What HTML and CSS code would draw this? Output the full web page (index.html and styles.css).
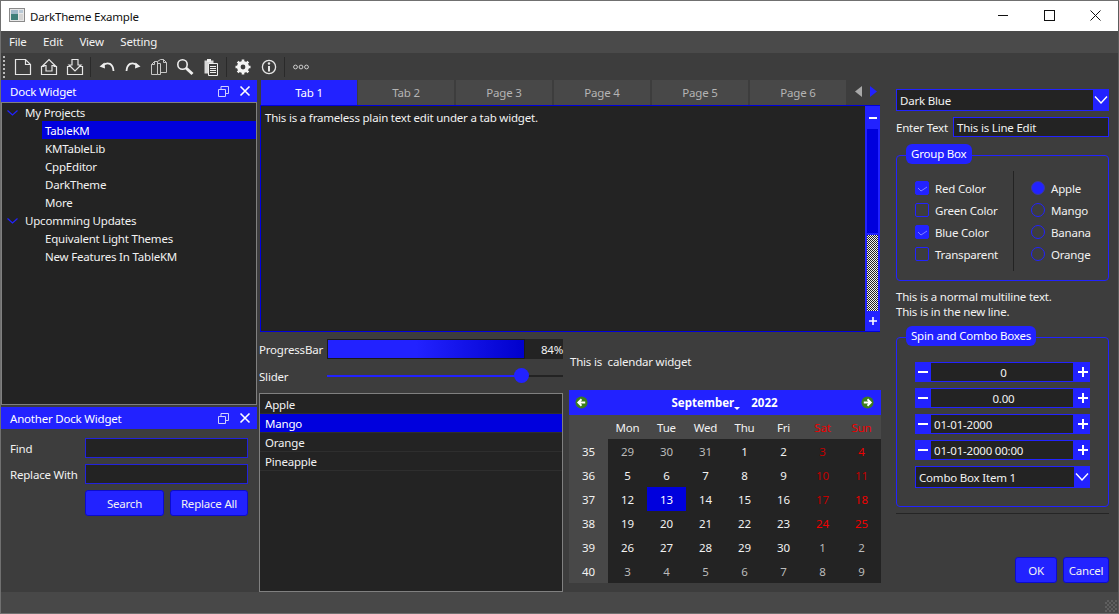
FILE: index.html
```html
<!DOCTYPE html>
<html lang="en">
<head>
<meta charset="utf-8">
<title>DarkTheme Example</title>
<link rel="stylesheet" href="styles.css">
</head>
<body>
<div class="window">
  <header class="titlebar">
    <svg class="app-icon" width="16" height="16" viewBox="0 0 16 16"><rect x="0.5" y="1.5" width="15" height="13" fill="#e8e8e8" stroke="#8a8a8a"/><rect x="2" y="3" width="7" height="10" fill="#3f7f7a"/><rect x="2" y="3" width="7" height="4" fill="#9fb8c8"/><rect x="10" y="3" width="4" height="3" fill="#b9c9d6"/><rect x="10" y="7" width="4" height="6" fill="#d4d4d4"/></svg>
    <span class="title-text">DarkTheme Example</span>
    <div class="win-controls">
      <span class="win-btn"><svg width="10" height="10" viewBox="0 0 10 10"><path d="M0 5.500h10" stroke="#111" fill="none"/></svg></span>
      <span class="win-btn"><svg width="11" height="11" viewBox="0 0 11 11"><rect x=".5" y=".5" width="10" height="10" stroke="#111" fill="none"/></svg></span>
      <span class="win-btn"><svg width="11" height="11" viewBox="0 0 11 11"><path d="M.5 .5l10 10M10.500 .5l-10 10" stroke="#111" fill="none"/></svg></span>
    </div>
  </header>
  <nav class="menubar"><span>File</span><span>Edit</span><span>View</span><span>Setting</span></nav>
  <div class="toolbar">
    <span class="grip"></span>
    <svg class="tb" width="18" height="18" viewBox="0 0 18 18"><path d="M1.500 1.500h10l5 5v10h-15zM11.500 1.500v5h5" fill="none" stroke="#e6e6e6" stroke-width="1.2"/></svg>
    <svg class="tb" width="18" height="18" viewBox="0 0 18 18"><path d="M4.500 8.500h-3v8h15v-8h-3M6 13h6V7.500h3L9 1.500 3 7.500h3z" fill="none" stroke="#e6e6e6" stroke-width="1.2"/></svg>
    <svg class="tb" width="18" height="18" viewBox="0 0 18 18"><path d="M4.500 8.500h-3v8h15v-8h-3M6 1.500h6V7h3l-6 6-6-6h3z" fill="none" stroke="#e6e6e6" stroke-width="1.2"/></svg>
    <span class="tb-sep"></span>
    <svg class="tb" width="18" height="18" viewBox="0 0 18 18"><path d="M5 7c5-3.500 10-1.500 10.500 6" fill="none" stroke="#eee" stroke-width="1.800"/><path d="M1.500 8.500l5-4 .5 6z" fill="#eee"/></svg>
    <svg class="tb" width="18" height="18" viewBox="0 0 18 18"><path d="M2.500 13c.5-7.500 5.500-9.500 10.500-6" fill="none" stroke="#eee" stroke-width="1.800"/><path d="M16.500 8.500l-5-4-.5 6z" fill="#eee"/></svg>
    <svg class="tb" width="18" height="18" viewBox="0 0 18 18"><path d="M1.500 6.500l3-3h3v13h-6zM1.500 6.500h3v-3M7.500 3.500l3-2h3l3 3v10h-6M13.500 1.500v3h3" fill="none" stroke="#c8c8c8"/><path d="M7.500 5.500h3v11h-3" fill="none" stroke="#c8c8c8"/></svg>
    <svg class="tb" width="18" height="18" viewBox="0 0 18 18"><circle cx="6.500" cy="6.500" r="4.700" fill="none" stroke="#eee" stroke-width="1.600"/><path d="M10 10l6.500 6" stroke="#eee" stroke-width="3"/></svg>
    <svg class="tb" width="18" height="18" viewBox="0 0 18 18"><path d="M2.500 2.500h9v13h-9z" fill="#d8d8d8"/><rect x="5" y="1" width="4" height="3" fill="#eee"/><path d="M6.500 5.500h9v12h-9z" fill="#3d3d3d" stroke="#eee"/><path d="M8 8.500h6M8 10.500h6M8 12.500h6M8 14.500h6" stroke="#eee"/></svg>
    <span class="tb-sep"></span>
    <svg class="tb" width="18" height="18" viewBox="0 0 18 18"><circle cx="9" cy="9" r="4.500" fill="none" stroke="#f4f4f4" stroke-width="3.200"/><path d="M9 1.500v15M1.500 9h15M3.700 3.700l10.600 10.600M14.300 3.700L3.700 14.300" stroke="#f4f4f4" stroke-width="2.600"/><circle cx="9" cy="9" r="2.400" fill="#3d3d3d"/></svg>
    <svg class="tb" width="18" height="18" viewBox="0 0 18 18"><circle cx="9" cy="9" r="6.600" fill="none" stroke="#e6e6e6" stroke-width="1.300"/><path d="M9 8v5.500" stroke="#e6e6e6" stroke-width="2"/><circle cx="9" cy="5.500" r="1.200" fill="#e6e6e6"/></svg>
    <span class="tb-sep"></span>
    <svg class="tb" width="18" height="18" viewBox="0 0 18 18"><circle cx="3.500" cy="9" r="1.900" fill="none" stroke="#ccc"/><circle cx="9" cy="9" r="1.900" fill="none" stroke="#ccc"/><circle cx="14.500" cy="9" r="1.900" fill="none" stroke="#ccc"/></svg>
  </div>

  <main class="main">
    <aside class="left">
      <section class="dock-tree">
        <div class="dock-title"><span>Dock Widget</span>
          <svg class="dock-ico" width="11" height="11" viewBox="0 0 11 11"><path d="M.5 3.500h7v7h-7zM3 3.500v-3h7.500v7h-3" fill="none" stroke="#cfcfff"/></svg>
          <svg class="dock-ico" width="12" height="12" viewBox="0 0 12 12"><path d="M1.500 1.500l9 9M10.500 1.500l-9 9" stroke="#fff" stroke-width="1.600"/></svg>
        </div>
        <div class="tree">
          <div class="tree-row"><svg class="chev" width="11" height="6" viewBox="0 0 11 6"><path d="M.5 .5l5 4.500 5-4.500" stroke="#2222ff" stroke-width="1.200" fill="none"/></svg>My Projects</div>
          <div class="tree-row child sel">TableKM</div>
          <div class="tree-row child">KMTableLib</div>
          <div class="tree-row child">CppEditor</div>
          <div class="tree-row child">DarkTheme</div>
          <div class="tree-row child">More</div>
          <div class="tree-row"><svg class="chev" width="11" height="6" viewBox="0 0 11 6"><path d="M.5 .5l5 4.500 5-4.500" stroke="#2222ff" stroke-width="1.200" fill="none"/></svg>Upcomming Updates</div>
          <div class="tree-row child">Equivalent Light Themes</div>
          <div class="tree-row child">New Features In TableKM</div>
        </div>
      </section>
      <section class="dock-find">
        <div class="dock-title"><span>Another Dock Widget</span>
          <svg class="dock-ico" width="11" height="11" viewBox="0 0 11 11"><path d="M.5 3.500h7v7h-7zM3 3.500v-3h7.500v7h-3" fill="none" stroke="#cfcfff"/></svg>
          <svg class="dock-ico" width="12" height="12" viewBox="0 0 12 12"><path d="M1.500 1.500l9 9M10.500 1.500l-9 9" stroke="#fff" stroke-width="1.600"/></svg>
        </div>
        <div class="find-form">
          <label>Find</label><div class="input"></div>
          <label>Replace With</label><div class="input"></div>
          <div class="find-btns"><span class="btn search">Search</span><span class="btn replace">Replace All</span></div>
        </div>
      </section>
    </aside>

    <section class="center">
      <div class="tabs">
        <span class="tab active">Tab 1</span><span class="tab">Tab 2</span><span class="tab">Page 3</span><span class="tab">Page 4</span><span class="tab">Page 5</span><span class="tab">Page 6</span>
        <span class="tab-arrows"><svg width="7" height="11" viewBox="0 0 7 11"><path d="M7 0v11L0 5.500z" fill="#a8a8a8"/></svg><svg width="7" height="11" viewBox="0 0 7 11"><path d="M0 0v11l7-5.500z" fill="#2222ff"/></svg></span>
      </div>
      <div class="editor">
        <div class="editor-text">This is a frameless plain text edit under a tab widget.</div>
        <div class="scrollbar">
          <span class="sb-btn"><svg width="8" height="2" viewBox="0 0 8 2"><rect width="8" height="2" fill="#fff"/></svg></span>
          <span class="sb-handle"></span>
          <span class="sb-hatch"></span>
          <span class="sb-btn"><svg width="8" height="8" viewBox="0 0 8 8"><path d="M0 4h8M4 0v8" stroke="#fff" stroke-width="1.600"/></svg></span>
        </div>
      </div>
      <div class="lower">
        <div class="lower-left">
          <div class="form-row"><span class="row-label">ProgressBar</span>
            <div class="progress"><div class="progress-fill" style="width:84%"></div><span class="progress-val">84%</span></div>
          </div>
          <div class="form-row"><span class="row-label">Slider</span>
            <div class="slider"><div class="slider-on" style="width:195px"></div><span class="slider-knob"></span></div>
          </div>
          <ul class="list">
            <li>Apple</li><li class="sel">Mango</li><li>Orange</li><li>Pineapple</li>
          </ul>
        </div>
        <div class="lower-right">
          <div class="cal-label">This is &nbsp;calendar widget</div>
          <div class="calendar">
            <div class="cal-head">
              <svg width="13" height="13" viewBox="0 0 14 14"><circle cx="7" cy="7" r="6.500" fill="#3c7d1c"/><path d="M11 7H4M7 3.500L3.500 7 7 10.500" stroke="#fff" stroke-width="2" fill="none"/></svg>
              <span class="cal-month">September<i class="cal-caret"></i></span><span class="cal-year">2022</span>
              <svg width="13" height="13" viewBox="0 0 14 14"><circle cx="7" cy="7" r="6.500" fill="#3c7d1c"/><path d="M3 7h7M7 3.500L10.500 7 7 10.500" stroke="#fff" stroke-width="2" fill="none"/></svg>
            </div>
            <div class="cal-grid">
              <span class="wk hd"></span><span class="hd">Mon</span><span class="hd">Tue</span><span class="hd">Wed</span><span class="hd">Thu</span><span class="hd">Fri</span><span class="hd red">Sat</span><span class="hd red">Sun</span>
              <span class="wk">35</span><span class="dim">29</span><span class="dim">30</span><span class="dim">31</span><span>1</span><span>2</span><span class="red dk">3</span><span class="red">4</span>
              <span class="wk">36</span><span>5</span><span>6</span><span>7</span><span>8</span><span>9</span><span class="red dk">10</span><span class="red dk">11</span>
              <span class="wk">37</span><span>12</span><span class="today">13</span><span>14</span><span>15</span><span>16</span><span class="red dk">17</span><span class="red">18</span>
              <span class="wk">38</span><span>19</span><span>20</span><span>21</span><span>22</span><span>23</span><span class="red">24</span><span class="red">25</span>
              <span class="wk">39</span><span>26</span><span>27</span><span>28</span><span>29</span><span>30</span><span class="dim">1</span><span class="dim">2</span>
              <span class="wk">40</span><span class="dim">3</span><span class="dim">4</span><span class="dim">5</span><span class="dim">6</span><span class="dim">7</span><span class="dim">8</span><span class="dim">9</span>
            </div>
          </div>
        </div>
      </div>
    </section>

    <aside class="right">
      <div class="combo top-combo"><span class="combo-text">Dark Blue</span><span class="combo-arrow"><svg width="14" height="8" viewBox="0 0 14 8"><path d="M1 .5l6 6.500 6-6.500" stroke="#fff" stroke-width="1.400" fill="none"/></svg></span></div>
      <div class="line-row"><span>Enter Text</span><div class="line-edit">This is Line Edit</div></div>
      <div class="group group-one">
        <span class="pill">Group Box</span>
        <div class="checks">
          <div class="opt"><span class="check on"><svg width="12" height="12" viewBox="0 0 12 12"><path d="M2 6l3 3 6-4" stroke="#8080ff" fill="none"/></svg></span>Red Color</div>
          <div class="opt"><span class="check"></span>Green Color</div>
          <div class="opt"><span class="check on"><svg width="12" height="12" viewBox="0 0 12 12"><path d="M2 6l3 3 6-4" stroke="#8080ff" fill="none"/></svg></span>Blue Color</div>
          <div class="opt"><span class="check"></span>Transparent</div>
        </div>
        <div class="vsep"></div>
        <div class="radios">
          <div class="opt"><span class="radio on"></span>Apple</div>
          <div class="opt"><span class="radio"></span>Mango</div>
          <div class="opt"><span class="radio"></span>Banana</div>
          <div class="opt"><span class="radio"></span>Orange</div>
        </div>
      </div>
      <p class="multi">This is a normal multiline text.<br>This is in the new line.</p>
      <div class="group group-two">
        <span class="pill">Spin and Combo Boxes</span>
        <div class="spin"><span class="spin-btn minus"></span><span class="spin-val mid">0</span><span class="spin-btn plus"></span></div>
        <div class="spin"><span class="spin-btn minus"></span><span class="spin-val mid">0.00</span><span class="spin-btn plus"></span></div>
        <div class="spin"><span class="spin-btn minus"></span><span class="spin-val">01-01-2000</span><span class="spin-btn plus"></span></div>
        <div class="spin"><span class="spin-btn minus"></span><span class="spin-val">01-01-2000 00:00</span><span class="spin-btn plus"></span></div>
        <div class="combo low-combo"><span class="combo-text">Combo Box Item 1</span><span class="combo-arrow"><svg width="14" height="8" viewBox="0 0 14 8"><path d="M1 .5l6 6.500 6-6.500" stroke="#fff" stroke-width="1.400" fill="none"/></svg></span></div>
      </div>
      <div class="hline"></div>
      <div class="dialog-btns"><span class="btn ok">OK</span><span class="btn cancel">Cancel</span></div>
    </aside>
  </main>
  <footer class="statusbar"><span class="size-grip"></span></footer>
</div>
</body>
</html>
```
FILE: styles.css
```css
* { box-sizing: border-box; }
html, body { margin: 0; padding: 0; }
body { font-family: "Noto Sans", "Open Sans", sans-serif; font-size: 11.5px; letter-spacing: -0.2px; color: #f2f2f2; background: #3d3d3d; overflow: hidden; }
.window { width: 1119px; height: 614px; display: flex; flex-direction: column; border: 1px solid #707070; border-right-color: #5c5c5c; background: #3d3d3d; overflow: hidden; }

.titlebar { height: 30px; flex: none; background: #fff; color: #111; display: flex; align-items: center; padding-left: 8px; }
.app-icon { margin: 0 5px 2px 0; }
.win-controls { margin-left: auto; display: flex; }
.win-btn { width: 46px; height: 30px; padding-bottom: 2px; display: flex; align-items: center; justify-content: center; }

.menubar { height: 22px; flex: none; background: #4a4a4a; display: flex; align-items: center; padding: 0 0 1px 8px; gap: 16.5px; }

.toolbar { height: 27px; flex: none; background: #3d3d3d; display: flex; align-items: center; padding-left: 2px; }
.grip { width: 2px; height: 22px; margin-right: 9px; background: repeating-linear-gradient(#bbb 0 2px, transparent 2px 4px); }
.tb { margin-right: 8px; flex: none; }
.tb-sep { width: 1px; height: 20px; background: #2a2a2a; margin: 0 7px 0 -2px; }

.main { height: 512px; flex: none; display: flex; }
.left { width: 256px; flex: none; display: flex; flex-direction: column; margin-right: 2px; }
.dock-title { height: 22px; flex: none; background: #2222ff; color: #fff; display: flex; align-items: center; padding: 0 6px 0 9px; }
.dock-title span { margin-right: auto; }
.dock-ico { margin-left: 10px; }
.dock-tree { height: 325px; flex: none; display: flex; flex-direction: column; }
.tree { flex: 1; background: #232323; border: 1px solid #808080; }
.tree-row { height: 18px; display: flex; align-items: center; padding-left: 23px; position: relative; }
.tree-row.child { margin-left: 40px; padding-left: 3px; }
.tree-row.sel, .list .sel { background: #0000dd; color: #fff; }
.chev { position: absolute; left: 5px; top: 7px; }

.dock-find { margin-top: 2px; flex: 1; display: flex; flex-direction: column; }
.find-form { display: grid; grid-template-columns: 75px 163px; row-gap: 6px; padding: 9px 0 0 9px; align-items: center; }
.input { height: 20px; background: #232323; border: 1px solid #2222dd; }
.find-btns { grid-column: 2; display: flex; gap: 6px; }
.btn { height: 26px; background: #2222ff; border: 1px solid #0c0ccc; border-radius: 3px; display: flex; align-items: center; justify-content: center; color: #f2f2f2; }
.search { width: 79px; }
.replace { width: 78px; }

.center { width: 623px; flex: none; display: flex; flex-direction: column; }
.tabs { height: 25px; flex: none; display: flex; padding-left: 2px; }
.tab { width: 98px; background: #484848; border-right: 2px solid #3d3d3d; color: #b4b4b4; display: flex; align-items: center; justify-content: center; }
.tab.active { width: 97px; background: #2222ff; color: #fff; border-right-width: 1px; }
.tab-arrows { display: flex; align-items: center; gap: 8px; padding: 0 0 2px 7px; }
.editor { height: 227px; flex: none; margin-left: 1px; width: 620px; display: flex; border: 1px solid #0000dd; border-right: none; background: #232323; }
.editor-text { flex: 1; padding: 4px; }
.scrollbar { width: 15px; flex: none; background: #2222ff; display: flex; flex-direction: column; align-items: center; }
.sb-btn { height: 23px; flex: none; width: 100%; display: flex; align-items: center; justify-content: center; }
.sb-btn:last-child { height: 20px; }
.sb-handle { width: 11px; height: 104px; flex: none; background: #0000dd; }
.sb-hatch { width: 11px; flex: 1; margin-top: 2px; background: repeating-conic-gradient(#f0f0f0 0 25%, #222 0 50%) 0 0 / 2px 2px; }

.lower { flex: 1; display: flex; }
.lower-left { width: 304px; flex: none; display: flex; flex-direction: column; }
.form-row { display: flex; align-items: center; height: 20px; margin-top: 7px; }
.row-label { width: 68px; flex: none; }
.progress { flex: 1; height: 20px; background: #232323; position: relative; display: flex; align-items: center; justify-content: flex-end; }
.progress-fill { position: absolute; left: 0; top: 0; bottom: 0; border: 1px solid #1a1a1a; background: linear-gradient(90deg, #2222ff, #2222ff 45%, #0000cc); }
.progress-val { position: relative; }
.slider { flex: 1; height: 2px; background: #232323; position: relative; }
.slider-on { height: 2px; background: #2222ff; }
.slider-knob { position: absolute; left: 187px; top: -7px; width: 15px; height: 15px; border-radius: 50%; background: #2222ff; }
.list { list-style: none; margin: 7px 0 0; padding: 1px 0 0; height: 199px; background: #232323; border: 1px solid #808080; }
.list li { height: 19px; padding-left: 5px; display: flex; align-items: center; border-bottom: 1px solid #2e2e2e; }

.lower-right { margin-left: 6px; width: 312px; flex: none; display: flex; flex-direction: column; }
.cal-label { height: 16px; margin-top: 22px; margin-left: 1px; line-height: 16px; }
.calendar { margin-top: 20px; }
.cal-head { height: 25px; background: #2222ff; display: flex; align-items: center; padding: 0 7px 1px 6px; font-weight: 700; letter-spacing: 0; color: #fff; }
.cal-month { margin-left: auto; position: relative; margin-right: 14px; padding-right: 3px; }
.cal-caret { position: absolute; right: -3px; bottom: 0; border: 3px solid transparent; border-top-color: #fff; border-bottom: 0; }
.cal-year { margin-right: auto; }
.cal-grid { display: grid; grid-template-columns: repeat(8, 39px); grid-auto-rows: 24px; background: #232323; }
.cal-grid span { display: flex; align-items: center; justify-content: center; }
.cal-grid .hd, .cal-grid .wk { background: #484848; }
.cal-grid .dim { color: #bbbbbb; }
.cal-grid .red { color: #ee0000; }
.cal-grid .red.dk { color: #c00000; }
.cal-grid .today { background: #0000dd; color: #fff; }

.right { flex: 1; padding: 9px 9px 0 14px; display: flex; flex-direction: column; }
.combo { display: flex; flex: none; height: 22px; background: #232323; border: 1px solid #2222ff; }
.combo-text { flex: 1; padding-left: 3px; display: flex; align-items: center; }
.combo-arrow { width: 15px; background: #2222ff; display: flex; align-items: center; justify-content: center; }
.line-row { display: flex; flex: none; align-items: center; justify-content: space-between; margin-top: 6px; height: 20px; }
.line-edit { width: 156px; height: 20px; background: #232323; border: 1px solid #2222ff; padding-left: 3px; display: flex; align-items: center; }
.group { flex: none; position: relative; border: 1px solid #2222ff; border-radius: 4px; }
.pill { position: absolute; left: 9px; top: -12px; height: 20px; padding: 0 5px; line-height: 19px; background: #2222ff; border-radius: 6px; color: #fff; white-space: nowrap; }
.group-one { height: 126px; margin-top: 18px; display: flex; padding: 15px 0 0 18px; }
.checks, .radios { display: flex; flex-direction: column; gap: 4px; padding-top: 8px; }
.checks { width: 98px; }
.opt { height: 18px; display: flex; align-items: center; gap: 6px; white-space: nowrap; }
.check { width: 14px; height: 14px; border: 1px solid #2222ff; border-radius: 2px; flex: none; display: flex; }
.check.on { background: #2222ff; }
.vsep { width: 1px; height: 100px; background: #232323; margin-right: 17px; }
.radio { width: 14px; height: 14px; border: 1px solid #2222ff; border-radius: 50%; flex: none; }
.radio.on { background: #2222ff; border-color: #3a3a9a; }
.multi { flex: none; margin: 8px 0 0; line-height: 15px; }
.group-two { height: 170px; margin-top: 18px; padding: 24px 18px 0; }
.spin { display: flex; height: 20px; background: #232323; border: 1px solid #2222ff; margin-bottom: 6px; }
.spin-btn { width: 15px; flex: none; background: #2222ff; position: relative; }
.spin-btn:last-child { width: 16px; }
.minus::before, .plus::before { content: ""; position: absolute; top: 8px; height: 2px; background: #fff; }
.minus::before { left: 2px; right: 3px; }
.plus::before { left: 5px; right: 1px; }
.plus::after { content: ""; position: absolute; left: 9px; width: 2px; top: 4px; height: 10px; background: #fff; }
.spin-val { flex: 1; display: flex; align-items: center; padding-left: 3px; }
.spin-val.mid { justify-content: center; }
.hline { flex: none; height: 1px; background: #252525; margin-top: 6px; }
.dialog-btns { flex: none; display: flex; justify-content: flex-end; gap: 6px; margin-top: 43px; }
.ok { width: 42px; }
.cancel { width: 46px; }

.statusbar { flex: 1; background: #484848; position: relative; }
.size-grip { position: absolute; right: 1px; bottom: 1px; width: 12px; height: 12px; background: repeating-conic-gradient(#5e5e5e 0 25%, transparent 0 50%) 0 0 / 4px 4px; }
```
